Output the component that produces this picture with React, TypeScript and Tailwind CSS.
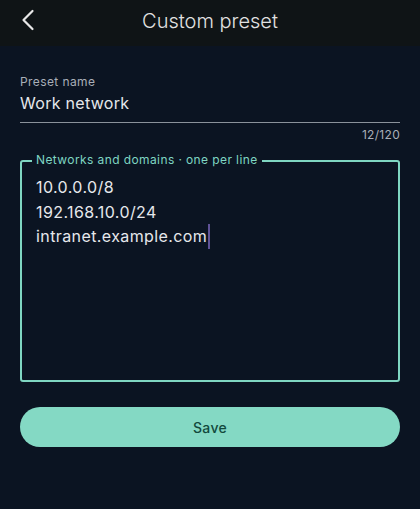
const lines = ["10.0.0.0/8", "192.168.10.0/24", "intranet.example.com"];

export default function App() {
  return (
    <div
      className="w-[420px] h-[509px] bg-[#0b1422] text-[#e4e6ea] overflow-hidden"
      style={{ fontFamily: "Inter, 'Noto Sans', sans-serif" }}
    >
      {/* Top bar */}
      <header className="relative h-[46px] bg-[#0f1416] flex items-center justify-center pb-[4px]">
        <button className="absolute left-[20px] top-[9px] text-[#e8e8e8]">
          <svg width="16" height="22" viewBox="0 0 16 22" fill="none" stroke="currentColor" strokeWidth="2.2" strokeLinecap="round" strokeLinejoin="round">
            <polyline points="12.5,2 3.5,11 12.5,20" />
          </svg>
        </button>
        <h1 className="text-[20px] text-[#e2e2e2] font-light tracking-[0px]">Custom preset</h1>
      </header>

      <main className="px-5 pt-[29px]">
        {/* Preset name field */}
        <div className="border-b border-[#8b929b] pb-[9px]">
          <div className="text-[12px] leading-[14px] text-[#a9afb8] tracking-[0.4px]">Preset name</div>
          <div className="mt-[4px] text-[16px] leading-[20px] text-[#e6e8ec] tracking-[0.3px]">Work network</div>
        </div>
        <div className="mt-[5px] text-right text-[12px] leading-[14px] text-[#a9afb8] tracking-[0.3px]">12/120</div>

        {/* Networks textarea */}
        <div className="relative mt-[18px] h-[222px] rounded-[3px] border-2 border-[#7fd6c2] pl-[14px] pt-[13px]">
          <span className="absolute left-[10px] -top-[9px] px-[4px] bg-[#0b1422] text-[12px] leading-[14px] text-[#7fd6c2] tracking-[0.4px]">
            Networks and domains · one per line
          </span>
          {lines.map((l, i) => (
            <div key={l} className="text-[16px] leading-[24.5px] text-[#e6e8ec] tracking-[0.4px] flex items-center">
              {l}
              {i === lines.length - 1 && <span className="ml-[1px] inline-block w-[2px] h-[25px] bg-[#5f5296]" />}
            </div>
          ))}
        </div>

        <button className="mt-[25px] w-full h-[40px] rounded-full bg-[#84d9c4] text-[14px] font-medium text-[#12493d] tracking-[0.3px]">
          Save
        </button>
      </main>
    </div>
  );
}
